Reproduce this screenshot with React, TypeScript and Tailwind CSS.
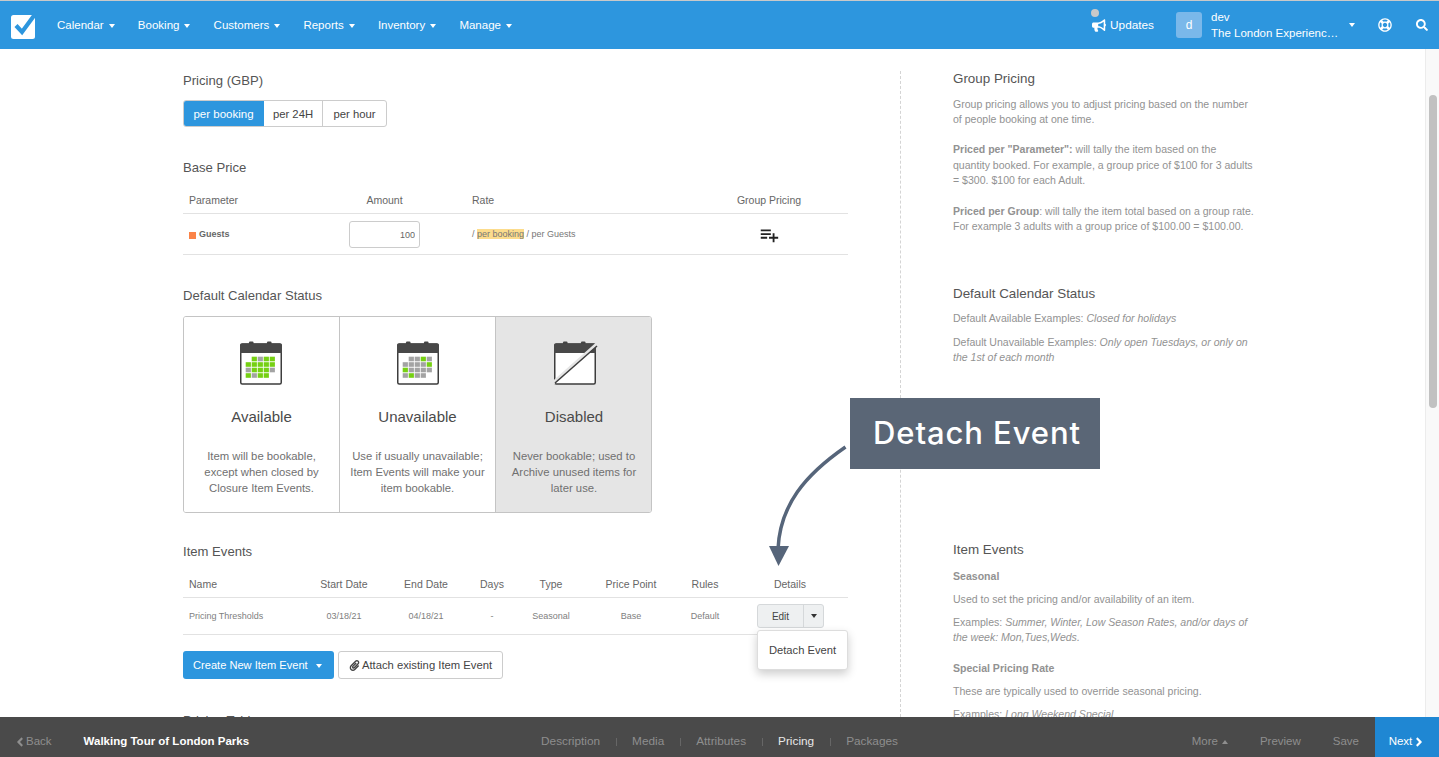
import React from 'react';
import { FaBullhorn, FaRegLifeRing, FaSearch, FaPaperclip, FaAngleLeft, FaAngleRight } from 'react-icons/fa';
import { MdPlaylistAdd } from 'react-icons/md';

const navItems = ['Calendar', 'Booking', 'Customers', 'Reports', 'Inventory', 'Manage'];
const steps = ['Description', 'Media', 'Attributes', 'Pricing', 'Packages'];

// g = green, x = grey, . = empty
const availableCells = ['.gxgg', 'ggggg', 'xgggx', 'gxgg.'];
const unavailableCells = ['.xxgx', 'xxxxg', 'gxxxx', 'xgxx.'];

function Caret({ className = 'border-t-white' }: { className?: string }) {
  return <span className={`inline-block h-0 w-0 border-x-[3.5px] border-t-[4px] border-x-transparent ${className}`} />;
}

function CalendarIcon({ cells, disabled, className = '' }: { cells?: string[]; disabled?: boolean; className?: string }) {
  return (
    <svg width="44" height="46" viewBox="-1 0 44 46" className={`overflow-visible ${className}`}>
      <rect x="9" y="0.5" width="4.5" height="4" rx="1" fill="#454545" />
      <rect x="27" y="0.5" width="4.5" height="4" rx="1" fill="#454545" />
      <rect x="0.75" y="3" width="40.5" height="40" rx="1.5" fill="#fff" stroke="#3d3d3d" strokeWidth="1.5" />
      <path d="M0 4.5a2 2 0 0 1 2-2h38a2 2 0 0 1 2 2V12H0z" fill="#484848" />
      {cells?.map((row, r) =>
        row.split('').map((c, i) =>
          c === '.' ? null : (
            <rect
              key={`${r}-${i}`}
              x={5.7 + i * 6}
              y={15.7 + r * 5.5}
              width="5.2"
              height="4.6"
              fill={c === 'g' ? '#76d013' : '#a3a3a3'}
            />
          ),
        ),
      )}
      {disabled && (
        <>
          <path d="M43.5 2.5 -1 42" stroke="#e5e5e5" strokeWidth="3.5" />
          <path d="M43 5 1 42" stroke="#3d3d3d" strokeWidth="1.5" />
        </>
      )}
    </svg>
  );
}

function StatusCard({
  title,
  lines,
  cells,
  disabled,
  iconClass,
}: {
  title: string;
  lines: string[];
  cells?: string[];
  disabled?: boolean;
  iconClass?: string;
}) {
  return (
    <div className={`flex w-[156px] shrink-0 flex-col items-center pt-6 ${disabled ? 'bg-[#e5e5e5]' : 'bg-white'}`}>
      <CalendarIcon cells={cells} disabled={disabled} className={iconClass} />
      <div className="mt-[20px] text-[15px] leading-5 text-[#4a4a4a]">{title}</div>
      <div className="mt-[21px] text-center text-[11.3px] leading-4 text-[#707070]">
        {lines.map((l) => (
          <div key={l}>{l}</div>
        ))}
      </div>
    </div>
  );
}

function Heading({ children, className = '' }: { children: React.ReactNode; className?: string }) {
  return <h2 className={`h-5 pt-px text-[13.1px] leading-5 font-normal text-[#555] ${className}`}>{children}</h2>;
}

function HelpTitle({ children, className = '' }: { children: React.ReactNode; className?: string }) {
  return <h3 className={`h-[14px] pt-px text-[13.4px] leading-[14px] font-normal text-[#555] ${className}`}>{children}</h3>;
}

function Help({ children, className = '' }: { children: React.ReactNode; className?: string }) {
  return <p className={`text-[10.55px] leading-[15.4px] text-[#929292] ${className}`}>{children}</p>;
}

export default function App() {
  return (
    <div className="relative flex h-[757px] w-[1439px] flex-col overflow-hidden bg-white font-['Liberation_Sans',Arial,sans-serif]">
      {/* top nav */}
      <header className="flex h-[49px] shrink-0 items-center border-t border-[#c9c9c9] bg-[#2d96de] text-white">
        <svg width="27" height="27" viewBox="0 0 27 27" className="mt-[1px] ml-[10px]">
          <rect x="1" y="3" width="24" height="24" rx="2.5" fill="#fff" />
          <path d="M6 13.5l6 6.5L24.5 3" fill="none" stroke="#2d96de" strokeWidth="4.2" />
        </svg>
        <nav className="ml-[20px] flex items-center gap-[23.2px] pt-[2px]">
          {navItems.map((item) => (
            <a key={item} className="flex items-center gap-[5px] text-[11.5px]">
              {item}
              <Caret />
            </a>
          ))}
        </nav>
        <div className="relative ml-auto flex items-center gap-[4px] pt-px text-[11.8px]">
          <span className="absolute -top-[7px] left-[-1px] h-2 w-2 rounded-full bg-[#c9c9c9]" />
          <FaBullhorn className="h-[13px] w-[14px]" />
          Updates
        </div>
        <div className="ml-[22px] flex h-[26px] w-[26px] items-center justify-center rounded-[3px] bg-[#7ab8ea] text-[12px]">
          d
        </div>
        <div className="ml-[9px] w-[130px] text-[11.5px] leading-4">
          <div>dev</div>
          <div className="truncate">The London Experience Ltd</div>
        </div>
        <Caret className="ml-[8px] border-t-white" />
        <FaRegLifeRing className="ml-[23px] h-[14px] w-[14px]" />
        <FaSearch className="mr-[11px] ml-[24px] h-3 w-3" />
      </header>

      {/* page */}
      <div className="flex min-h-0 flex-1 overflow-hidden">
        <main className="w-[900px] shrink-0 pt-[21px] pl-[183px]">
          <Heading>Pricing (GBP)</Heading>
          <div className="mt-[10px] flex h-[27px] w-[204px] overflow-hidden rounded-[3px] border border-[#ccc] text-[11.3px] text-[#444]">
            <button className="-my-px -ml-px w-[81px] bg-[#2d96de] pt-[2px] text-[11.5px] text-white">per booking</button>
            <button className="w-[59px] border-r border-[#ccc] pt-[2px]">per 24H</button>
            <button className="flex-1 pt-[2px]">per hour</button>
          </div>

          <Heading className="mt-[30px]">Base Price</Heading>
          <div className="mt-[10px] w-[665px]">
            <div className="grid h-[27px] grid-cols-[166px_71px_1fr_158px] items-center border-b border-[#e2e2e2] pt-[2px] text-[10.5px] text-[#666]">
              <span className="pl-[6px]">Parameter</span>
              <span className="text-center">Amount</span>
              <span className="pl-[52px]">Rate</span>
              <span className="text-center">Group Pricing</span>
            </div>
            <div className="grid h-[41px] grid-cols-[166px_71px_1fr_158px] items-center border-b border-[#e2e2e2] text-[9px] text-[#777]">
              <span className="flex items-center gap-[3px] pt-[2px] pl-[6px] font-bold text-[#666]">
                <span className="h-[7px] w-[7px] bg-[#fb8347]" />
                Guests
              </span>
              <input
                readOnly
                value="100"
                className="h-[27px] w-[71px] rounded-[3px] border border-[#ccc] pt-px pr-[4px] text-right text-[9px] text-[#666]"
              />
              <span className="pt-[2px] pl-[52px]">
                / <span className="bg-[#fcdc8c]">per booking</span> / per Guests
              </span>
              <span className="flex justify-center pt-[2px]">
                <MdPlaylistAdd className="h-[22px] w-[22px] text-[#222]" />
              </span>
            </div>
          </div>

          <Heading className="mt-[30px]">Default Calendar Status</Heading>
          <div className="mt-[11px] flex h-[197px] w-[469px] divide-x divide-[#c4c4c4] overflow-hidden rounded-[3px] border border-[#c4c4c4]">
            <StatusCard
              title="Available"
              cells={availableCells}
              iconClass="-ml-[2px]"
              lines={['Item will be bookable,', 'except when closed by', 'Closure Item Events.']}
            />
            <StatusCard
              title="Unavailable"
              cells={unavailableCells}
              lines={['Use if usually unavailable;', 'Item Events will make your', 'item bookable.']}
            />
            <StatusCard
              title="Disabled"
              disabled
              iconClass="ml-[2px]"
              lines={['Never bookable; used to', 'Archive unused items for', 'later use.']}
            />
          </div>

          <Heading className="mt-[28px]">Item Events</Heading>
          <div className="mt-[10px] w-[665px]">
            <div className="grid h-[27px] grid-cols-[125px_72px_92px_40px_78px_82px_66px_104px] items-center border-b border-[#e2e2e2] pt-[2px] text-center text-[10.5px] text-[#666]">
              <span className="pl-[6px] text-left">Name</span>
              <span>Start Date</span>
              <span>End Date</span>
              <span>Days</span>
              <span>Type</span>
              <span>Price Point</span>
              <span>Rules</span>
              <span>Details</span>
            </div>
            <div className="grid h-[37px] grid-cols-[125px_72px_92px_40px_78px_82px_66px_104px] items-center border-b border-[#e2e2e2] text-center text-[9px] text-[#808080] [&>span:not(:last-child)]:pt-[2px]">
              <span className="pl-[6px] text-left">Pricing Thresholds</span>
              <span>03/18/21</span>
              <span>04/18/21</span>
              <span>-</span>
              <span>Seasonal</span>
              <span>Base</span>
              <span>Default</span>
              <span className="flex pl-[19px]">
                <span className="flex h-6 w-[67px] overflow-hidden rounded-[3px] border border-[#d5d8da] bg-[#eef0f1] text-[10px] text-[#444]">
                  <span className="flex w-[46px] items-center justify-center border-r border-[#d5d8da] pt-px">Edit</span>
                  <span className="flex flex-1 items-center justify-center">
                    <Caret className="border-t-[#333]" />
                  </span>
                </span>
              </span>
            </div>
          </div>

          <div className="mt-[16px] flex h-[28px] gap-1">
            <button className="flex w-[151px] items-center gap-[8px] rounded-[3px] bg-[#2d96de] pt-px pl-[10px] text-[11.1px] text-white">
              Create New Item Event
              <Caret />
            </button>
            <button className="flex w-[165px] items-center justify-center gap-[2px] rounded-[3px] border border-[#ccc] pt-px text-[11.25px] text-[#444]">
              <FaPaperclip className="h-[11px] w-[11px]" />
              Attach existing Item Event
            </button>
          </div>

          <Heading className="mt-[31px]">Pricing Table</Heading>
        </main>

        <aside className="mt-[22px] w-[525px] shrink-0 border-l border-dashed border-[#d4d4d4] pl-[52px]">
          <div className="w-[303px]">
            <HelpTitle>Group Pricing</HelpTitle>
            <Help className="mt-[11.6px]">
              Group pricing allows you to adjust pricing based on the number of people booking at one time.
            </Help>
            <Help className="mt-[15px]">
              <b>Priced per "Parameter":</b> will tally the item based on the
              <br />
              quantity booked. For example, a group price of $100 for 3 adults = $300. $100 for each Adult.
            </Help>
            <Help className="mt-[15px]">
              <b>Priced per Group</b>: will tally the item total based on a group rate. For example 3 adults with a group
              price of $100.00 = $100.00.
            </Help>

            <HelpTitle className="mt-[51.4px]">Default Calendar Status</HelpTitle>
            <Help className="mt-[11.6px]">
              Default Available Examples: <i>Closed for holidays</i>
            </Help>
            <Help className="mt-[8px]">
              Default Unavailable Examples: <i>Only open Tuesdays, or only on the 1st of each month</i>
            </Help>

            <HelpTitle className="mt-[176.4px]">Item Events</HelpTitle>
            <Help className="mt-[12.6px]">
              <b>Seasonal</b>
            </Help>
            <Help className="mt-[8px]">Used to set the pricing and/or availability of an item.</Help>
            <Help className="mt-[7.4px]">
              Examples: <i>Summer, Winter, Low Season Rates, and/or days of the week: Mon,Tues,Weds.</i>
            </Help>
            <Help className="mt-[15px]">
              <b>Special Pricing Rate</b>
            </Help>
            <Help className="mt-[8px]">These are typically used to override seasonal pricing.</Help>
            <Help className="mt-[8px]">
              Examples: <i>Long Weekend Special</i>
            </Help>
          </div>
        </aside>

        <div className="flex-1 border-l border-[#ececec] bg-[#f9f9f9] pt-[46px] pl-[3px]">
          <div className="h-[313px] w-2 rounded-full bg-[#c1c1c1]" />
        </div>
      </div>

      {/* bottom bar */}
      <footer className="flex h-10 shrink-0 bg-[#4a4a4a] text-[11.5px] text-[#8e8e8e]">
        <div className="flex flex-1 items-center pt-[10px]">
          <span className="ml-[14px] flex items-center">
            <FaAngleLeft className="h-[14px] w-[12px]" />
            Back
          </span>
          <span className="ml-[32px] font-bold text-white">Walking Tour of London Parks</span>
          <nav className="ml-[292px] flex items-center text-[11.8px]">
            {steps.map((s, i) => (
              <React.Fragment key={s}>
                {i > 0 && <span className="mx-[15.5px] h-2 w-px bg-[#666]" />}
                <span className={s === 'Pricing' ? 'text-[#e8e8e8]' : ''}>{s}</span>
              </React.Fragment>
            ))}
          </nav>
          <span className="ml-auto flex items-center gap-[4px]">
            More
            <span className="inline-block h-0 w-0 border-x-[3.5px] border-b-[4px] border-x-transparent border-b-[#8e8e8e]" />
          </span>
          <span className="ml-[32px]">Preview</span>
          <span className="mr-4 ml-[32px]">Save</span>
        </div>
        <span className="flex h-full w-16 items-center justify-center gap-[1px] bg-[#1f87d3] pt-[10px] text-white">
          Next
          <FaAngleRight className="h-[14px] w-[12px]" />
        </span>
      </footer>

      {/* dropdown open on the Edit button */}
      <div className="absolute top-[630px] left-[757px] flex h-10 w-[91px] items-center justify-center rounded-[3px] border border-[#ddd] bg-white pt-px text-[11.2px] text-[#444] shadow-[0_4px_10px_rgba(0,0,0,0.2)]">
        Detach Event
      </div>

      {/* annotation callout */}
      <div className="absolute top-[398px] left-[850px] flex h-[71px] w-[250px] items-center justify-center bg-[#5a6676] pl-[4px] font-['Inter',sans-serif] text-[31px] font-medium tracking-[0.9px] text-white">
        Detach Event
      </div>
      <svg width="100" height="130" viewBox="760 440 100 130" className="absolute top-[440px] left-[760px]">
        <path d="M845.5 447C805 475 780 505 778 549" fill="none" stroke="#56657a" strokeWidth="3.5" />
        <path d="M769 546h20l-10.5 20z" fill="#56657a" />
      </svg>
    </div>
  );
}
